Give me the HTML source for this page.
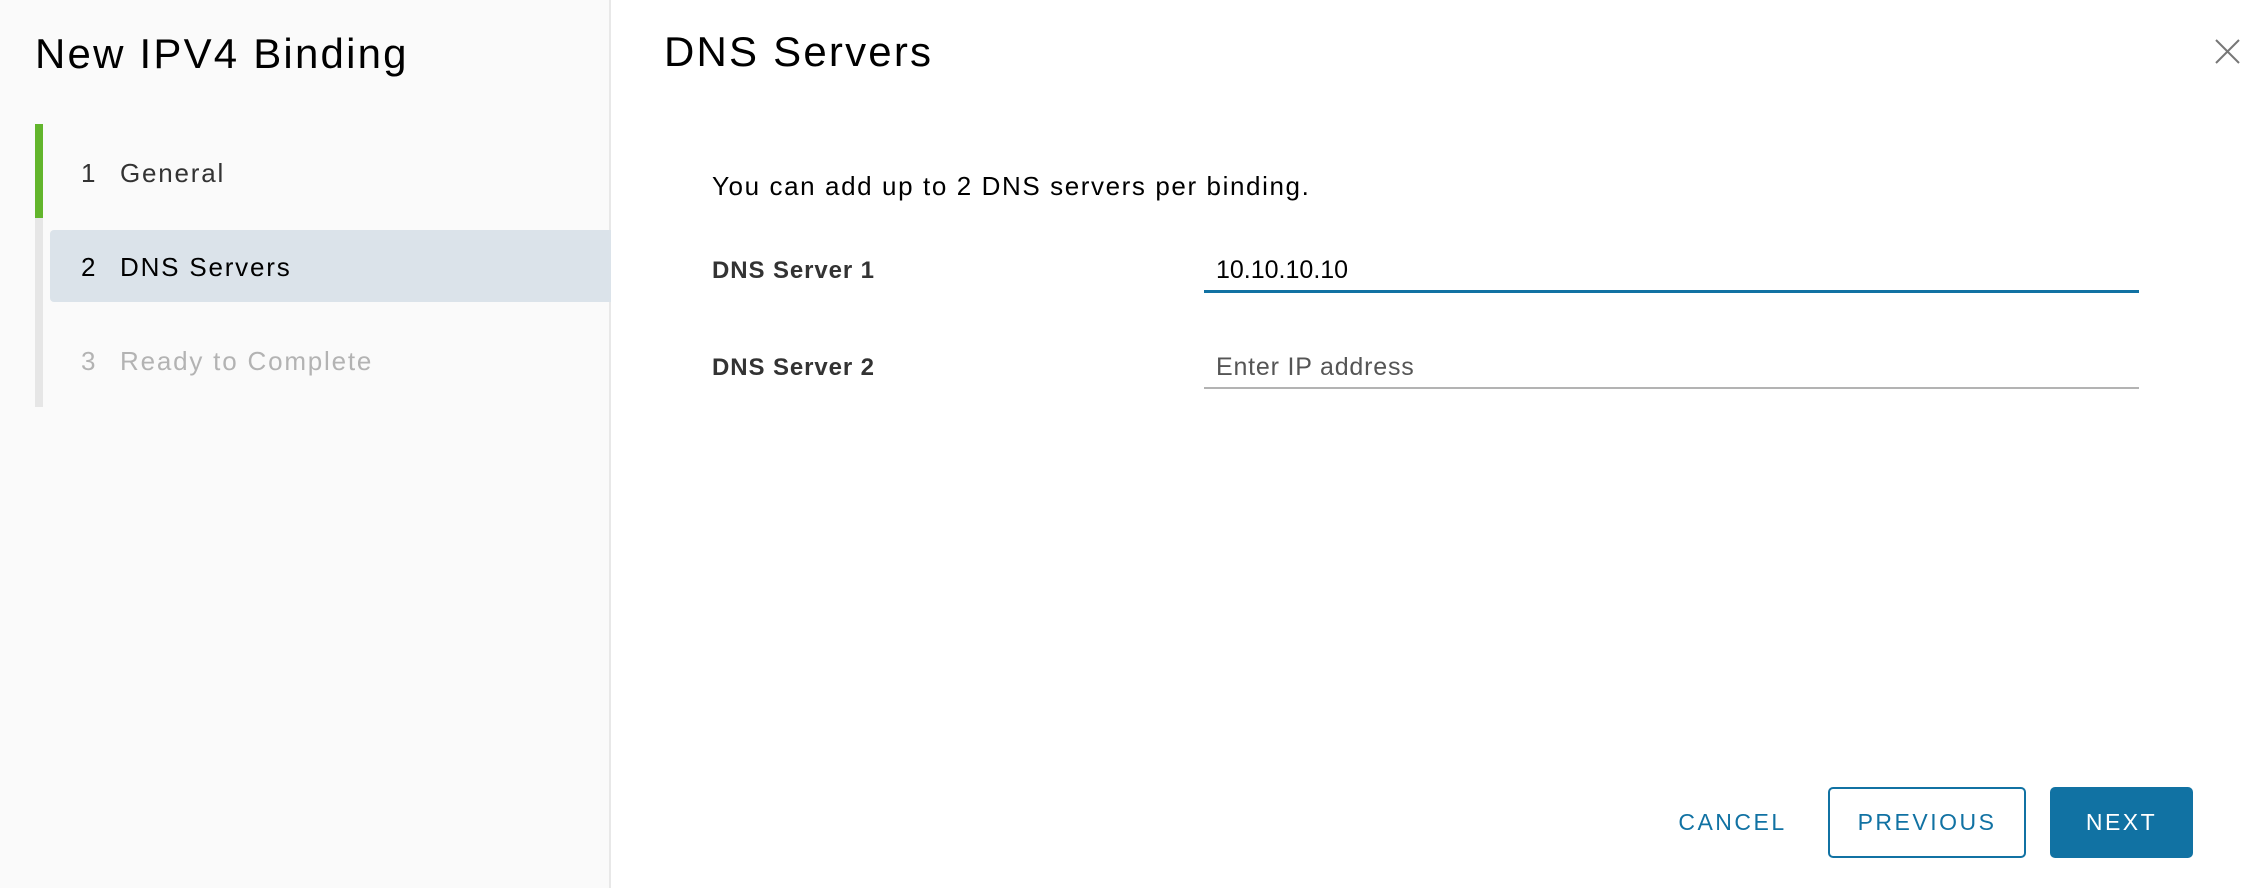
<!DOCTYPE html>
<html><head><meta charset="utf-8"><style>
*{margin:0;padding:0;box-sizing:border-box}
body{width:2264px;height:888px;background:#fff;font-family:"Liberation Sans",sans-serif;color:#000;position:relative;overflow:hidden}
.side{position:absolute;left:0;top:0;width:611px;height:888px;background:#fafafa;border-right:2px solid #e8e8e8}
.t{position:absolute;font-size:42px;white-space:nowrap;line-height:1;letter-spacing:2.2px}
.bar{position:absolute;left:35px;width:8px}
.hl{position:absolute;left:50px;top:230px;width:561px;height:72px;background:#dbe3ea;border-radius:4px 0 0 4px}
.st{position:absolute;font-size:26px;line-height:1;white-space:nowrap;letter-spacing:1.8px}
.st .n{position:absolute;left:0}
.st .l{position:absolute;left:39px}
.lab{position:absolute;left:712px;font-size:24px;font-weight:bold;color:#333;line-height:1;white-space:nowrap;letter-spacing:0.9px}
.inp{position:absolute;left:1204px;width:935px}
.btn{position:absolute;font-size:23px;letter-spacing:2.5px;color:#1172a3;display:flex;align-items:center;justify-content:center;border-radius:5px;height:71px;top:787px}
</style></head><body>
<div class="side"></div>
<div class="t" style="left:35px;top:33px">New IPV4 Binding</div>
<div class="bar" style="top:124px;height:94px;background:#62b52c"></div>
<div class="bar" style="top:218px;height:189px;background:#e6e6e6"></div>
<div class="hl"></div>
<div class="st" style="left:81px;top:160px;color:#333"><span class="n">1</span><span class="l">General</span></div>
<div class="st" style="left:81px;top:254px;color:#000"><span class="n">2</span><span class="l">DNS Servers</span></div>
<div class="st" style="left:81px;top:348px;color:#b3b3b3"><span class="n">3</span><span class="l">Ready to Complete</span></div>

<div class="t" style="left:664px;top:31px">DNS Servers</div>
<svg style="position:absolute;left:2215px;top:39px" width="25" height="25" viewBox="0 0 25 25"><path d="M1 1L24 24M24 1L1 24" stroke="#777" stroke-width="2"/></svg>

<div style="position:absolute;left:712px;top:173px;font-size:26px;line-height:1;white-space:nowrap;letter-spacing:1.6px">You can add up to 2 DNS servers per binding.</div>
<div class="lab" style="top:259px">DNS Server 1</div>
<div class="inp" style="top:258px;font-size:25px;line-height:1;padding-left:12px">10.10.10.10</div>
<div class="inp" style="top:290px;height:3px;background:#1172a3"></div>
<div class="lab" style="top:356px">DNS Server 2</div>
<div class="inp" style="top:355px;font-size:25px;line-height:1;padding-left:12px;color:#555;letter-spacing:0.8px">Enter IP address</div>
<div class="inp" style="top:387px;height:2px;background:#b3b3b3"></div>

<div class="btn" style="left:1660px;width:145px">CANCEL</div>
<div class="btn" style="left:1828px;width:198px;border:2px solid #1172a3">PREVIOUS</div>
<div class="btn" style="left:2050px;width:143px;background:#1172a3;color:#fff">NEXT</div>
</body></html>
